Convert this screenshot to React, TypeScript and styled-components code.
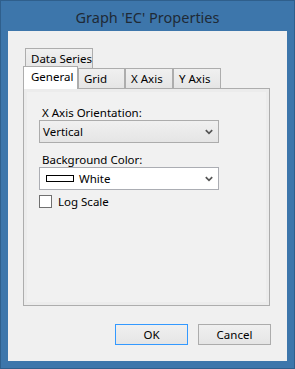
import React from 'react';
import styled, { createGlobalStyle } from 'styled-components';

const Global = createGlobalStyle`
  html, body { margin: 0; padding: 0; }
  body { font-family: "Noto Sans", "Open Sans", sans-serif; font-size: 11.5px; color: #000; }
  * { box-sizing: border-box; }
`;

const Window = styled.div`
  width: 295px;
  height: 369px;
  background: #3d76ab;
  border: 1px solid #2f5f8c;
  display: flex;
  flex-direction: column;
  padding: 0 7px 7px 7px;
`;

const TitleBar = styled.div`
  height: 30px;
  display: flex;
  align-items: center;
  justify-content: center;
  font-size: 14.5px;
  color: #1f2a36;
  padding-top: 1px;
`;

const Client = styled.div`
  flex: 1;
  background: #f0f0f0;
  display: flex;
  flex-direction: column;
  padding: 17px 16px 16px 15px;
`;

const TabControl = styled.div`
  flex: 1;
  display: flex;
  flex-direction: column;
  margin-right: 1px;
`;

const TabRow = styled.div<{ $indent?: number }>`
  height: 20px;
  display: flex;
  align-items: flex-end;
  padding-left: ${p => p.$indent ?? 0}px;
  position: relative;
  z-index: 1;
`;

const Tab = styled.div<{ $w: number; $active?: boolean }>`
  width: ${p => p.$w}px;
  height: ${p => (p.$active ? 23 : 20)}px;
  margin-bottom: ${p => (p.$active ? -1 : 0)}px;
  border: 1px solid #adadad;
  border-bottom: none;
  background: ${p => (p.$active ? '#ffffff' : 'linear-gradient(#f0f0f0, #e5e5e5)')};
  display: flex;
  align-items: ${p => (p.$active ? 'flex-start' : 'center')};
  padding-top: ${p => (p.$active ? 2 : 0)}px;
  padding-left: ${p => (p.$active ? 7 : 5)}px;
  white-space: nowrap;
  line-height: 15px;
`;

const Panel = styled.div`
  flex: 1;
  border: 1px solid #adadad;
  background: #ececec;
  padding: 3px;
  display: flex;
`;

const PanelInner = styled.div`
  flex: 1;
  background: #f1f1f1;
  display: flex;
  flex-direction: column;
  padding: 13px 0 0 12px;
`;

const Label = styled.div<{ $mt?: number }>`
  height: 15px;
  line-height: 15px;
  padding-left: 3px;
  margin-top: ${p => p.$mt ?? 0}px;
`;

const Combo = styled.div<{ $white?: boolean }>`
  width: 180px;
  height: 23px;
  border: 1px solid ${p => (p.$white ? '#abadb3' : '#acacac')};
  background: ${p => (p.$white ? '#ffffff' : 'linear-gradient(#f0f0f0, #e5e5e5)')};
  display: flex;
  align-items: center;
  padding: 0 5px 0 ${p => (p.$white ? 6 : 3)}px;
`;

const ComboText = styled.span`
  flex: 1;
  line-height: 15px;
`;

const Swatch = styled.span`
  width: 28px;
  height: 7px;
  border: 1px solid #000;
  background: #fff;
  margin-right: 5px;
`;

const CheckRow = styled.div`
  display: flex;
  align-items: center;
  margin-top: 5px;
  height: 13px;
`;

const CheckBox = styled.span`
  width: 13px;
  height: 13px;
  border: 1px solid #707070;
  background: #fff;
  margin-right: 6px;
`;

const ButtonRow = styled.div`
  display: flex;
  justify-content: flex-end;
  gap: 10px;
  margin-top: 18px;
`;

const Button = styled.div<{ $default?: boolean }>`
  width: 73px;
  height: 21px;
  border: 1px solid ${p => (p.$default ? '#3399ff' : '#acacac')};
  background: linear-gradient(#f0f0f0, #e5e5e5);
  display: flex;
  align-items: center;
  justify-content: center;
  line-height: 15px;
`;

const Chevron = () => (
  <svg width="8" height="6" viewBox="0 0 8 6">
    <path d="M0.8 1.2 L4 4.4 L7.2 1.2" fill="none" stroke="#555" strokeWidth="1.7" />
  </svg>
);

export default function App() {
  return (
    <>
      <Global />
      <Window>
        <TitleBar>Graph 'EC' Properties</TitleBar>
        <Client>
          <TabControl>
            <TabRow $indent={2}>
              <Tab $w={68}>Data Series</Tab>
            </TabRow>
            <TabRow>
              <Tab $w={55} $active>General</Tab>
              <Tab $w={47}>Grid</Tab>
              <Tab $w={48}>X Axis</Tab>
              <Tab $w={48}>Y Axis</Tab>
            </TabRow>
            <Panel>
              <PanelInner>
                <Label>X Axis Orientation:</Label>
                <Combo>
                  <ComboText>Vertical</ComboText>
                  <Chevron />
                </Combo>
                <Label $mt={9}>Background Color:</Label>
                <Combo $white>
                  <Swatch />
                  <ComboText>White</ComboText>
                  <Chevron />
                </Combo>
                <CheckRow>
                  <CheckBox />
                  <span>Log Scale</span>
                </CheckRow>
              </PanelInner>
            </Panel>
          </TabControl>
          <ButtonRow>
            <Button $default>OK</Button>
            <Button>Cancel</Button>
          </ButtonRow>
        </Client>
      </Window>
    </>
  );
}
